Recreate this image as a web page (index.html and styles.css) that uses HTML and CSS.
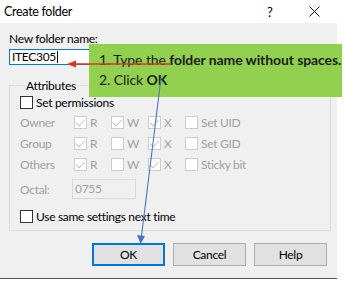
FILE: index.html
```html
<!DOCTYPE html>
<html lang="en">
<head>
    <meta charset="UTF-8">
    <meta name="viewport" content="width=device-width, initial-scale=1.0">
    <title>Create folder</title>
    <link rel="stylesheet" href="styles.css">
</head>
<body>
    <div class="window">
        <div class="titlebar">
            <span class="title">Create folder</span>
            <span class="title-help">?</span>
            <svg class="title-close" width="11" height="11" viewBox="0 0 11 11">
                <path d="M0.5 0.5 L10.5 10.5 M10.5 0.5 L0.5 10.5" stroke="#111" stroke-width="1"/>
            </svg>
        </div>
        <div class="dialog">
            <div class="field-label">New folder name:</div>
            <div class="name-input">ITEC305<span class="caret"></span></div>

            <fieldset class="attributes">
                <legend>Attributes</legend>
                <label class="check-row"><span class="box"></span> Set permissions</label>

                <div class="perm-grid">
                    <span class="muted">Owner</span>
                    <span class="perm"><span class="box off checked"></span>R</span>
                    <span class="perm"><span class="box off checked"></span>W</span>
                    <span class="perm"><span class="box off checked"></span>X</span>
                    <span class="perm"><span class="box off"></span>Set UID</span>

                    <span class="muted">Group</span>
                    <span class="perm"><span class="box off checked"></span>R</span>
                    <span class="perm"><span class="box off"></span>W</span>
                    <span class="perm"><span class="box off checked"></span>X</span>
                    <span class="perm"><span class="box off"></span>Set GID</span>

                    <span class="muted">Others</span>
                    <span class="perm"><span class="box off checked"></span>R</span>
                    <span class="perm"><span class="box off"></span>W</span>
                    <span class="perm"><span class="box off checked"></span>X</span>
                    <span class="perm"><span class="box off"></span>Sticky bit</span>
                </div>

                <div class="octal-row">
                    <span class="muted">Octal:</span>
                    <span class="octal-input">0755</span>
                </div>

                <label class="check-row remember"><span class="box"></span> Use same settings next time</label>
            </fieldset>

            <div class="button-group">
                <button class="default-btn">OK</button>
                <button>Cancel</button>
                <button>Help</button>
            </div>
        </div>
    </div>

    <!-- tutorial callout drawn over the dialog -->
    <div class="callout">
        <div>1. Type the <b>folder name without spaces.</b></div>
        <div>2. Click <b>OK</b></div>
    </div>
    <svg class="arrows" width="347" height="282" viewBox="0 0 347 282">
        <line x1="170" y1="64" x2="74" y2="64" stroke="#d8352a" stroke-width="1.3"/>
        <polygon points="67,64 76,60.5 76,67.5" fill="#e0302a"/>
        <line x1="161" y1="78" x2="141.5" y2="236" stroke="#4a76c0" stroke-width="1.1"/>
        <polygon points="140.7,244 137,235 145,236" fill="#4a76c0"/>
    </svg>
</body>
</html>
```

FILE: styles.css
```css
body {
    margin: 0;
    background: #fff;
    font-family: Lato, "Noto Sans", sans-serif;
    font-size: 12px;
    letter-spacing: -0.3px;
    color: #000;
    width: 347px;
    height: 282px;
    position: relative;
    overflow: hidden;
}
.window {
    width: 337px;
    height: 278px;
    background: #f0f0f0;
    border-bottom: 1px solid #555;
}
.titlebar {
    height: 23px;
    background: #fff;
    display: flex;
    align-items: center;
    padding-left: 4px;
}
.title {
    flex: 1;
    font-size: 12.5px;
}
.title-help {
    width: 42px;
    font-size: 13px;
}
.title-close {
    margin-right: 17px;
}
.dialog {
    padding: 8px 6px 0 9px;
}
.field-label {
    line-height: 16px;
}
.name-input {
    margin-top: 2px;
    height: 14px;
    line-height: 14px;
    border: 1px solid #0078d7;
    background: #fff;
    padding-left: 2px;
}
.caret {
    display: inline-block;
    width: 1px;
    height: 12px;
    background: #000;
    vertical-align: -2px;
    margin-left: 1px;
}
.attributes {
    margin: 13px 0 0;
    padding: 0 0 4px 10px;
    border: 1px solid #dcdcdc;
}
.attributes legend {
    padding: 0 2px;
    margin-left: 4px;
    line-height: 15px;
}
.check-row {
    display: flex;
    align-items: center;
    gap: 3px;
    height: 19px;
}
.box {
    width: 11px;
    height: 11px;
    border: 1px solid #333;
    background: #fff;
    display: inline-block;
    position: relative;
    flex-shrink: 0;
}
.box.off {
    border-color: #cccccc;
}
.box.checked::after {
    content: "";
    position: absolute;
    left: 1px;
    top: 2px;
    width: 8px;
    height: 4px;
    border-left: 1px solid #c4c4c4;
    border-bottom: 1px solid #c4c4c4;
    transform: rotate(-45deg);
}
.muted {
    color: #a0a0a0;
}
.perm-grid {
    display: grid;
    grid-template-columns: 54px 37px 37px 37px auto;
    grid-auto-rows: 21px;
    align-items: center;
}
.perm {
    display: flex;
    align-items: center;
    gap: 3px;
    color: #a0a0a0;
}
.octal-row {
    display: flex;
    align-items: center;
    height: 22px;
    margin-top: 3px;
}
.octal-row .muted {
    width: 52px;
}
.octal-input {
    width: 60px;
    height: 18px;
    line-height: 18px;
    border: 1px solid #d9d9d9;
    padding-left: 2px;
    color: #a0a0a0;
}
.remember {
    margin-top: 7px;
}
.button-group {
    display: flex;
    justify-content: flex-end;
    gap: 8px;
    margin: 12px 4px 0 0;
}
.button-group button {
    width: 73px;
    height: 23px;
    background: #e1e1e1;
    border: 1px solid #adadad;
    font-family: inherit;
    font-size: 12px;
    letter-spacing: inherit;
    color: #000;
    padding: 0;
}
.button-group .default-btn {
    border: 2px solid #0078d7;
}
.callout {
    position: absolute;
    left: 89px;
    top: 44px;
    width: 253px;
    height: 53px;
    box-sizing: border-box;
    background: #92d050;
    padding: 6px 0 0 10px;
    font-family: Lato, sans-serif;
    font-size: 14px;
    letter-spacing: -0.1px;
    line-height: 20px;
    color: #1c1c1c;
    white-space: nowrap;
}
.arrows {
    position: absolute;
    left: 0;
    top: 0;
    pointer-events: none;
}
```
